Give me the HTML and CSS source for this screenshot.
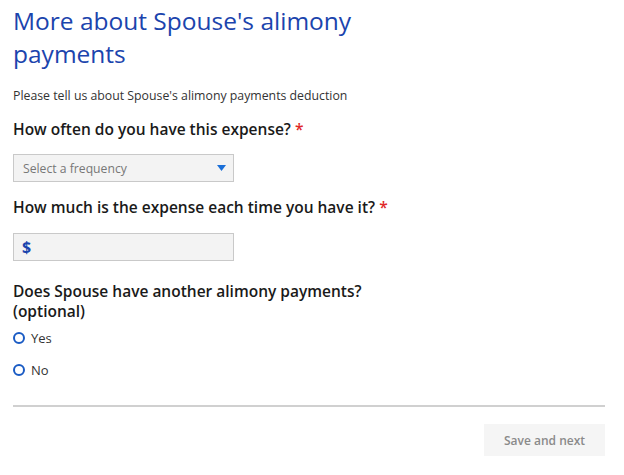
FILE: index.html
```html
<!DOCTYPE html>
<html lang="en">
<head>
  <meta charset="UTF-8" />
  <meta name="viewport" content="width=device-width, initial-scale=1.0"/>
  <title>Alimony payments</title>
  <link rel="stylesheet" href="styles.css">
</head>
<body>
  <div class="page">
    <h1>More about Spouse's alimony<br>payments</h1>
    <p class="intro">Please tell us about Spouse's alimony payments deduction</p>

    <form id="expense-form">
      <div class="field">
        <label class="question" for="frequency">How often do you have this expense? <span class="req">*</span></label>
        <div class="select">
          <span class="placeholder">Select a frequency</span>
          <svg class="caret" width="9" height="6" viewBox="0 0 9 6"><path d="M0 0h9L4.5 6z" fill="#1a6fd8"/></svg>
        </div>
      </div>

      <div class="field amount">
        <label class="question" for="amount">How much is the expense each time you have it? <span class="req">*</span></label>
        <div class="money">
          <span class="dollar">$</span>
          <input type="text" id="amount" name="amount" />
        </div>
      </div>

      <div class="field optional">
        <div class="question">Does Spouse have another alimony payments?<br>(optional)</div>
        <div class="radio-group">
          <label class="radio"><span class="dot"></span>Yes</label>
          <label class="radio"><span class="dot"></span>No</label>
        </div>
      </div>
    </form>

    <div class="footer">
      <button type="button" class="next">Save and next</button>
    </div>
  </div>
</body>
</html>
```

FILE: styles.css
```css
* { box-sizing: border-box; }

body {
  margin: 0;
  font-family: "Open Sans", "Noto Sans", sans-serif;
  background: #ffffff;
  color: #222;
}

.page {
  padding: 4px 19px 0 13px;
}

h1 {
  margin: 0;
  font-size: 24.5px;
  line-height: 33px;
  font-weight: 400;
  color: #1b44ad;
}

.intro {
  margin: 17px 0 0;
  font-size: 12.3px;
  line-height: 18px;
  color: #333;
}

.field {
  margin-top: 14px;
}

.amount {
  margin-top: 15px;
}

.question {
  display: block;
  font-size: 15.5px;
  line-height: 20px;
  font-weight: 600;
  color: #1a1a1a;
}

.optional {
  margin-top: 20px;
}

.req {
  color: #e02828;
}

.select {
  display: flex;
  align-items: center;
  justify-content: space-between;
  width: 221px;
  height: 28px;
  margin-top: 15px;
  padding: 0 7px 0 9px;
  background: #f3f3f3;
  border: 1px solid #c9c9c9;
}

.placeholder {
  font-size: 12.2px;
  color: #777;
}

.money {
  display: flex;
  align-items: center;
  width: 221px;
  height: 28px;
  margin-top: 16px;
  padding-left: 8px;
  background: #f3f3f3;
  border: 1px solid #c9c9c9;
}

.dollar {
  font-size: 16px;
  font-weight: 700;
  color: #1b44ad;
}

.money input {
  flex: 1;
  border: none;
  background: transparent;
  outline: none;
  font-family: inherit;
  font-size: 14px;
}

.radio-group {
  display: flex;
  flex-direction: column;
  gap: 12px;
  margin-top: 7px;
}

.radio {
  display: flex;
  align-items: center;
  gap: 6px;
  font-size: 13px;
  line-height: 20px;
  color: #333;
}

.dot {
  width: 12px;
  height: 12px;
  border: 2px solid #1a5bc4;
  border-radius: 50%;
}

.footer {
  margin-top: 25px;
  border-top: 2px solid #d0d0d0;
  padding-top: 17px;
  display: flex;
  justify-content: flex-end;
}

.next {
  width: 121px;
  height: 32px;
  border: none;
  background: #f5f5f5;
  font-family: inherit;
  font-size: 12px;
  font-weight: 600;
  color: #8a8a8a;
}
```
